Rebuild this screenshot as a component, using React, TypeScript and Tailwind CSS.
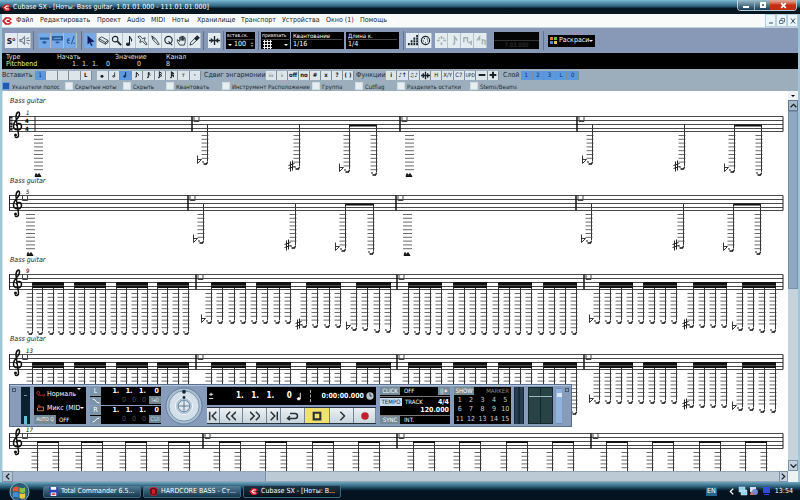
import type { ReactNode } from "react";
import clsx from "clsx";

const menu = [
  { label: "Файл", width: "w-[24px]" },
  { label: "Редактировать", width: "w-[57px]" },
  { label: "Проект", width: "w-[30px]" },
  { label: "Audio", width: "w-[24px]" },
  { label: "MIDI", width: "w-[21px]" },
  { label: "Ноты", width: "w-[25px]" },
  { label: "Хранилище", width: "w-[44px]" },
  { label: "Транспорт", width: "w-[41px]" },
  { label: "Устройства", width: "w-[44px]" },
  { label: "Окно (1)", width: "w-[34px]" },
  { label: "Помощь", width: "w-[30px]" },
];

const info = [
  { label: "Type", value: "Pitchbend", style: "w-[51px]", valueStyle: "text-[#f0efa0]" },
  { label: "Начать", value: "1.  1.  1.    0", style: "w-[58px]", valueStyle: "pl-[15px]" },
  { label: "Значение", value: "0", style: "w-[51px]", valueStyle: "pl-[22px]" },
  { label: "Канал", value: "8", style: "w-[40px]", valueStyle: "" },
];

const filters = [
  { label: "Указатели полос", width: "w-[63px]", checked: true },
  { label: "Скрытые ноты", width: "w-[58px]" },
  { label: "Скрыть", width: "w-[43px]" },
  { label: "Квантовать", width: "w-[56px]" },
  { label: "Инструмент Расположение", width: "w-[90px]" },
  { label: "Группа", width: "w-[43px]" },
  { label: "Cutflag", width: "w-[42px]" },
  { label: "Разделить остатки", width: "w-[73px]" },
  { label: "Stems/Beams", width: "w-[60px]" },
];

const noteLengths: [string, ReactNode][] = [
  ["1/1", <ellipse key="n" cx="6" cy="8" rx="2" ry="1.5" fill="currentColor" />],
  ["1/2", <path key="n" d="M7 2v6M7 8a1.5 1.2 0 1 1-3 0a1.5 1.2 0 1 1 3 0" />],
  ["1/4", <path key="n" d="M7 2v6a1.5 1.2 0 1 1-1-1z" fill="currentColor" />],
  ["1/8", <path key="n" d="M5 9V2l3 3v2M5 9H3.5" strokeWidth="1.5" />],
  ["1/16", <path key="n" d="M5 10V2l3 2M5 4l3 3M5 9.5H3" strokeWidth="1.5" />],
  ["1/32", <path key="n" d="M5 10V1l4 3M5 4l4 3M5 6l3 3M5 10H3" strokeWidth="1.5" />],
  ["1/64", <path key="n" d="M5 10V1l4 3-4-1 4 4-4-1 4 3M5 10H3" strokeWidth="1.5" />],
];

function Icon({ children, className = "size-[11px]" }: { children: ReactNode; className?: string }) {
  return (
    <svg viewBox="0 0 12 12" className={className} fill="none" stroke="currentColor" strokeWidth="1.2" aria-hidden="true">
      {children}
    </svg>
  );
}

function Tool({ label, active, dim, children }: { label: string; active?: boolean; dim?: boolean; children: ReactNode }) {
  return (
    <button
      aria-label={label}
      className={clsx(
        "flex h-[15px] w-[13px] items-center justify-center border-r border-[#b3bfca]",
        active ? "bg-[#76a9e8]" : "bg-[#e3ecf0]",
        dim ? "text-[#a3b0ae]" : "text-[#1d2730]"
      )}
    >
      {children}
    </button>
  );
}

function Small({ label, active, children }: { label: string; active?: boolean; children?: ReactNode }) {
  return (
    <button
      aria-label={label}
      className={clsx(
        "flex h-[9px] min-w-0 flex-1 items-center justify-center border-r border-[#7d8c99] text-[6px] leading-none",
        active ? "bg-[#5c98e0] text-[#0c2b60]" : "bg-[#dce5ea] text-[#18202a]"
      )}
    >
      {children}
    </button>
  );
}

function Caret() {
  return <span className="border-x-2 border-t-2 border-x-transparent border-t-white" />;
}

function Logo({ className }: { className: string }) {
  return (
    <svg viewBox="0 0 12 12" className={className} aria-hidden="true">
      <path d="M0 6 4 1.500h5L12 4 9 6l3 2-3 2.500H4z" fill="#d51f2b" />
      <path d="M9 4H6L4 6l2 2h3" fill="none" stroke="#fff" strokeWidth="1.6" />
    </svg>
  );
}

function TitleBar() {
  return (
    <header className="flex h-[14px] shrink-0 items-center bg-linear-to-b from-[#7dbbd6] via-[#2d617c] via-45% to-[#071722] to-60% pl-[2px] text-white">
      <Logo className="mr-[2px] size-[9px]" />
      <h1 className="text-[7px] leading-[14px]">Cubase SX - [Ноты: Bass guitar, 1.01.01.000 - 111.01.01.000]</h1>
      <div className="mr-[3px] ml-auto flex h-[11px] self-start overflow-hidden rounded-b-sm border border-t-0 border-[#b6cfdb]">
        <button aria-label="Свернуть" className="flex w-[17px] items-center justify-center border-r border-[#9ab4c2] bg-linear-to-b from-[#9dc0cf] to-[#173c52]">
          <span className="mt-[3px] h-[2px] w-[6px] bg-white" />
        </button>
        <button aria-label="Восстановить" className="flex w-[15px] items-center justify-center bg-linear-to-b from-[#9dc0cf] to-[#173c52]">
          <span className="size-[6px] border-2 border-white" />
        </button>
        <button aria-label="Закрыть" className="flex w-[26px] items-center justify-center bg-linear-to-b from-[#e0a090] from-10% to-[#c42d12] to-50%">
          <Icon className="size-[7px]"><path d="m2 2 8 8M10 2l-8 8" stroke="#fff" strokeWidth="3" /></Icon>
        </button>
      </div>
    </header>
  );
}

function MenuBar() {
  const control = "flex w-[11px] items-center justify-center border border-[#b5cfdb] bg-[#ebf5fa]";
  return (
    <nav className="flex h-[13px] shrink-0 items-center bg-[#f8fafa] text-[7px] text-[#222]">
      <Logo className="mr-[4px] size-[10px]" />
      {menu.map((item) => (
        <button key={item.label} className={clsx("text-left", item.width)}>{item.label}</button>
      ))}
      <div className="ml-auto flex h-full text-[#365266]">
        <button aria-label="Свернуть окно нот" className={control}><Icon className="size-[6px]"><path d="M2 10h8" strokeWidth="2" /></Icon></button>
        <button aria-label="Восстановить окно нот" className={control}><Icon className="size-[6px]"><path d="M1 5h7v6H1zM4 4V1h7v7H9" strokeWidth="1.5" /></Icon></button>
        <button aria-label="Закрыть окно нот" className={control}><Icon className="size-[6px]"><path d="m2 1 8 10M10 1 2 11" strokeWidth="2" /></Icon></button>
      </div>
    </nav>
  );
}

function Divider() {
  return <span className="mx-[2px] h-[19px] w-px bg-[#5f7391]" />;
}

function Field({ id, label, value }: { id: string; label: string; value: string }) {
  return (
    <div className="relative mr-[2px] flex h-[17px] w-[53px] flex-col bg-black px-[2px] text-white">
      <label htmlFor={id} className="border-b border-[#444] text-[6px] leading-[7px]">{label}</label>
      <select id={id} className="w-full appearance-none bg-black text-[7px] leading-[9px]">
        <option>{value}</option>
      </select>
      <span className="pointer-events-none absolute right-[3px] bottom-[3px]"><Caret /></span>
    </div>
  );
}

function ToolBar() {
  return (
    <div className="flex h-[26px] shrink-0 items-center border-t border-[#c6d3df] bg-[#8799b6] pl-[3px]">
      <div className="flex">
        <Tool label="Solo"><span className="text-[10px] leading-none font-bold">s<sup className="text-[5px]">o</sup></span></Tool>
        <Tool label="Звук"><Icon><path d="M1 5h2l3-3v8L3 7H1zM8 4l3-1M8 6h4M8 8l3 2" stroke="#758390" /></Icon></Tool>
      </div>
      <Divider />
      <div className="flex pr-[2px] pl-[2px]">
        <Tool label="Строка инструментов" active><Icon><path d="M1 4h10M4 8h4" strokeWidth="2.5" stroke="#285e9a" /></Icon></Tool>
        <Tool label="Строка фильтров" active><Icon><path d="M1 2h10v3H1zM4 8h4" strokeWidth="2" stroke="#285e9a" /></Icon></Tool>
        <Tool label="Информация" active><Icon><path d="M5 4a2 2 0 1 0 0 5M5 6H2M10 1 7 10M9 9h2" stroke="#285e9a" /></Icon></Tool>
      </div>
      <Divider />
      <div className="flex">
        <Tool label="Указатель" active><Icon><path d="m3 1 7 6-4 1 2 3-1 1-2-4-2 2z" fill="#0c1b55" stroke="#0c1b55" strokeWidth=".4" /></Icon></Tool>
        <Tool label="Ластик"><Icon><path d="m1 4 3-2 7 4v2L8 10 1 6zM1 4l7 4 3-2M8 8v2" strokeWidth=".9" /></Icon></Tool>
        <Tool label="Лупа"><Icon><circle cx="4.5" cy="4.5" r="3" /><path d="m7 7 4 4" strokeWidth="2" /></Icon></Tool>
        <Tool label="Нота"><Icon><path d="M6 10V1c0 3 4 3 2 6" /><ellipse cx="4.5" cy="10" rx="1.8" ry="1.3" fill="currentColor" /></Icon></Tool>
        <Tool label="Клей"><Icon><path d="m1 2 2-1 3 3 3-1-1 3 3 4-1 1-4-4-3 1 1-3z" strokeWidth=".9" /></Icon></Tool>
        <Tool label="Карандаш"><Icon><path d="m2 1 1 4 6 6 1-1-4-6zM2 1l3 4" strokeWidth=".9" /></Icon></Tool>
        <Tool label="Квантизация"><Icon><circle cx="6" cy="5.5" r="4" /><path d="m6 7 4 4" /></Icon></Tool>
        <Tool label="Рука"><Icon><path d="M4 11 1.500 7V5L4 7V2.500h1.500V6 1.500H7V6 1.500h1.500V6 3H10v5l-1 3z" strokeWidth=".9" /></Icon></Tool>
        <Tool label="Пипетка"><Icon><path d="m1 11 1-3 4-4 2 2-4 4z" strokeWidth=".9" /><path d="m6 4 3-3 2 2-3 3" fill="currentColor" /></Icon></Tool>
      </div>
      <Divider />
      <div className="flex pl-[2px]">
        <Tool label="Автопрокрутка"><Icon><path d="M6 1v10M0 6h12" strokeWidth="1.5" /><path d="m2 3 3 3-3 3zM10 3 7 6l3 3z" fill="currentColor" stroke="none" /></Icon></Tool>
      </div>
      <Divider />
      <div className="mr-px flex h-[17px] w-[29px] flex-col bg-black px-px text-white">
        <label htmlFor="velocity" className="border-b border-[#444] text-[5px] leading-[7px] whitespace-nowrap">встав.ск.</label>
        <div className="flex items-center pl-px">
          <Caret />
          <input id="velocity" defaultValue="100" className="ml-[2px] w-[16px] bg-black text-[7px] leading-[9px]" />
          <Icon className="h-[7px] w-[4px]"><path d="m1 3 5-3 5 3zM1 9l5 3 5-3z" fill="#fff" stroke="none" /></Icon>
        </div>
      </div>
      <Divider />
      <button aria-label="Привязка" className="mr-px flex h-[17px] w-[29px] flex-col bg-black px-px text-left text-white">
        <span className="w-full border-b border-[#444] text-[5px] leading-[7px]">привязать</span>
        <span className="flex w-full items-center justify-between px-px"><Icon className="size-[9px]"><path d="M0 2h12M0 6h12M0 10h12M2 0v12M6 0v12M10 0v12" /></Icon><Caret /></span>
      </button>
      <Field id="quantize" label="Квантование" value="1/16" />
      <Field id="length" label="Длина к." value="1/4" />
      <Divider />
      <div className="mr-[3px] flex">
        <Tool label="Пошаговый ввод"><Icon><path d="M1 10h2M4 10h2M7 10h2M10 10h2M4 7h2M7 7h2M10 7h2M7 4h2M10 4h2M10 1h2" strokeWidth="2.3" /></Icon></Tool>
        <Tool label="MIDI вход"><Icon><circle cx="6" cy="6" r="4.500" /><circle cx="6" cy="6" r="2.500" strokeDasharray="1 2" /></Icon></Tool>
      </div>
      <div className="flex">
        <Tool label="MIDI ввод" dim><Icon><path d="M6 1v3M6 8v3M1 6h3M8 6h3M3 3l1 1M9 3 8 4" strokeWidth="1.8" /></Icon></Tool>
        <Tool label="Ввод ноты" dim><Icon><path d="M6 10V2l3 4M6 10H4" strokeWidth="1.5" /></Icon></Tool>
        <Tool label="Ввод высоты" dim><Icon><path d="M2 8V3h4v5M7 9l3-2v4" strokeWidth="1.5" /></Icon></Tool>
        <Tool label="Ввод скорости" dim><Icon><path d="M2 6 5 2v4M8 10V5l3 1v5" strokeWidth="1.5" /></Icon></Tool>
      </div>
      <div className="mr-[2px] ml-[7px] flex h-[17px] w-[45px] items-end justify-center bg-[#050505] text-[6px] leading-[8px] text-[#3c3c3c]">
        <span className="w-full border-t border-[#333] text-center">7.03.000</span>
      </div>
      <Divider />
      <button className="ml-[2px] flex h-[12px] w-[47px] items-center bg-black pl-[2px] text-[7px] text-white">
        <span className="mr-[2px] grid grid-cols-2 gap-px">
          <i className="size-[3px] bg-[#e07a32]" /><i className="size-[3px] bg-[#6ebf4b]" />
          <i className="size-[3px] bg-[#4f87d8]" /><i className="size-[3px] bg-[#e5c54b]" />
        </span>
        Раскраси
        <Caret />
      </button>
    </div>
  );
}

function InfoLine() {
  return (
    <dl className="flex h-[16px] shrink-0 bg-black pt-px pl-[4px] text-[7px] leading-[7px] text-[#dfe3e6]">
      {info.map((item) => (
        <div key={item.label} className={item.style}>
          <dt>{item.label}</dt>
          <dd className={clsx("whitespace-pre", item.valueStyle)}>{item.value}</dd>
        </div>
      ))}
    </dl>
  );
}

function SymbolBar() {
  return (
    <div className="flex h-[12px] shrink-0 items-center bg-[#9caebb] text-[7px] text-[#1c2731]">
      <span className="w-[33px] shrink-0">Вставить</span>
      <div className="mr-[5px] flex w-[57px]">
        <Small label="Голос 1" active>1</Small>
        <Small label="Голос 2" />
        <Small label="Голос 3" />
        <Small label="Голос 4" />
        <Small label="L"><b>L</b></Small>
      </div>
      <div className="mr-[3px] flex w-[104px]">
        {noteLengths.map(([label, icon]) => (
          <Small key={label} label={label} active={label === "1/4"}><Icon className="size-[8px]">{icon}</Icon></Small>
        ))}
        <Small label="Триоль">т</Small>
        <Small label="С точкой"><b>·</b></Small>
      </div>
      <span className="w-[62px] whitespace-nowrap">Сдвиг энгармонии</span>
      <div className="mr-[2px] flex w-[88px]">
        {["♭♭", "♭", "off", "no", "#", "x", "?", "( )"].map((s) => <Small key={s} label={s}><b>{s}</b></Small>)}
      </div>
      <span className="w-[30px]">Функции</span>
      <div className="mr-[4px] flex w-[113px]">
        <Small label="Сведения"><b>i</b></Small>
        <Small label="Перевернуть"><b>♪↑</b></Small>
        <Small label="Группировать"><b>♫♪</b></Small>
        <Small label="Автолейаут"><Icon className="size-[9px]"><path d="M6 1v10M0 6h12M3 3v6M9 3v6" strokeWidth="1.8" /></Icon></Small>
        <Small label="Скрыть ноты">H</Small>
        <Small label="Позиция">X/Y</Small>
        <Small label="Аккорд">C7</Small>
        <Small label="Обновить"><span className="text-[5px]">UPD</span></Small>
        <Small label="Меньше"><Icon className="size-[8px]"><path d="M1 6h10" strokeWidth="3" /></Icon></Small>
        <Small label="Больше"><Icon className="size-[8px]"><path d="M1 6h10M6 1v10" strokeWidth="3" /></Icon></Small>
      </div>
      <span className="w-[18px]">Слой</span>
      <div className="flex w-[58px]">
        {["1", "2", "3", "L", "0"].map((s) => <Small key={s} label={`Слой ${s}`} active>{s}</Small>)}
      </div>
    </div>
  );
}

function FilterBar() {
  return (
    <div className="flex h-[10px] shrink-0 items-center bg-[#9caebb] text-[6px] text-[#1c2731]">
      {filters.map((item) => (
        <label key={item.label} className={clsx("flex items-center gap-[2px] whitespace-nowrap", item.width)}>
          <input type="checkbox" defaultChecked={item.checked} className="size-[8px] shrink-0 appearance-none border border-[#d0dbe2] bg-[#e6eef2] checked:border-[#6c9be0] checked:bg-[#2358ab]" />
          {item.label}
        </label>
      ))}
    </div>
  );
}

/* ---- score ---- */

type Mark = "flat" | "sharp";

const LINES = [0, 4, 8, 12, 15];

function Accidental({ type, x, y }: { type: Mark; x: number; y: number }) {
  if (type === "flat") return <path d={`M${x} ${y - 6}v8l4-4h-4`} fill="none" stroke="#222" strokeWidth=".9" />;
  return <path d={`M${x + 1} ${y - 5}v10M${x + 3} ${y - 6}v10M${x - 1} ${y - 1}l6-2M${x - 1} ${y + 2}l6-2`} fill="none" stroke="#222" />;
}

function Column({ x, top, end, mark, head = true }: { x: number; top: number; end: number; mark?: Mark; head?: boolean }) {
  const count = Math.floor((end - 21) / 3.8) + 1;
  return (
    <g>
      <path d={`M${x} ${top + 8}V${top + end}`} stroke="#333" />
      {Array.from({ length: count }, (_, i) => (
        <path key={i} d={`M${x - 6} ${top + 19 + i * 3.8}h7`} stroke="#444" strokeWidth=".8" />
      ))}
      {head && <path d={`M${x - 5} ${top + end}l1 1M${x - 4} ${top + end + 2.5}h3l1-2`} fill="none" stroke="#111" strokeWidth="1.3" />}
      {mark && <Accidental type={mark} x={x - 10} y={top + end} />}
    </g>
  );
}

function Whole({ x, top }: { x: number; top: number }) {
  return (
    <g>
      {Array.from({ length: 10 }, (_, i) => (
        <path key={i} d={`M${x - 4} ${top + 19 + i * 3.8}h9`} stroke="#444" strokeWidth=".8" />
      ))}
      <path d={`M${x - 3} ${top + 60}l1-3 2 2 1-2 2 3z`} fill="#222" stroke="#111" />
    </g>
  );
}

function Staff({ top, bars, number, first }: { top: number; bars: number[]; number: string; first?: boolean }) {
  return (
    <g>
      {LINES.map((y) => <path key={y} d={`M9 ${top + y}H783`} stroke="#4a4a4a" />)}
      <path d={`M9.500 ${top}v15M783 ${top}v15`} stroke="#222" />
      {bars.map((x) => (
        <g key={x}>
          <path d={`M${x} ${top}v15`} stroke="#111" strokeWidth="1.5" />
          <path d={`M${x + 2} ${top}v5h5v-5`} fill="none" stroke="#444" />
        </g>
      ))}
      <path
        d={`M15 ${top + 20}c1 2 4 1 3.500-2l-2.500-17c0-6 4-7 3.500-3 0 4-6 6-6 11.500 0 5 8 5 8 .5 0-4-5-4-5-.5`}
        fill="none"
        stroke="#111"
        strokeWidth="1.5"
      />
      <circle cx="15.500" cy={top + 18.5} r="1.500" fill="#111" />
      {first ? (
        <>
          <path d={`M11 ${top}v15`} stroke="#222" strokeWidth="3" strokeDasharray="2 1" />
          <text x="25" y={top + 6} fontSize="6" fontWeight="700">4</text>
          <text x="25" y={top + 14} fontSize="6" fontWeight="700">4</text>
          <path d={`M35 ${top}v15`} stroke="#222" />
        </>
      ) : (
        <path d={`M22.500 ${top}v5h5v-5`} fill="none" stroke="#444" />
      )}
      <text x="26" y={top - 2} fontSize="6" fontStyle="italic">{number}</text>
    </g>
  );
}

function Phrase({ top, stems }: { top: number; stems: number[] }) {
  const [a, b, c, d] = stems;
  return (
    <g>
      <Column x={a} top={top} end={45} mark="flat" />
      <Column x={b} top={top} end={50} mark="sharp" />
      <Column x={c} top={top} end={53} mark="flat" />
      <Column x={d} top={top} end={56} />
      <path d={`M${c} ${top + 9}H${d}`} stroke="#111" strokeWidth="2" />
    </g>
  );
}

// sixteenths: four groups of four under a double beam
function Sixteenths({ top, starts, width, falling }: { top: number; starts: number[]; width: number; falling?: boolean }) {
  return (
    <g>
      {starts.map((start, g) => (
        <g key={start}>
          {[0, 1, 2, 3].map((i) => {
            const end = !falling ? 57 : g < 2 ? 46 : g === 2 ? 50 : i < 2 ? 53 : 55;
            const mark = falling && i === 0 && g !== 1 ? (g === 2 ? "sharp" : "flat") : undefined;
            return <Column key={i} x={start + Math.round((i * width) / 3)} top={top} end={end} mark={mark} />;
          })}
          <path d={`M${start} ${top + 10.5}h${width + 0.5}`} stroke="#111" strokeWidth="6" />
          <path d={`M${start} ${top + 11}h${width}`} stroke="#777" strokeWidth=".6" />
        </g>
      ))}
    </g>
  );
}

function Score() {
  const pairs = [37, 81, 125, 168, 219, 265, 312, 358, 413, 459, 506, 552, 606, 652, 699, 745];
  return (
    <svg viewBox="3 91 785 380" preserveAspectRatio="xMinYMin slice" className="size-full" role="img" aria-label="Bass guitar">
      {[103, 183, 262, 341].map((y) => (
        <text key={y} x="10" y={y} fontSize="7" fontStyle="italic" fill="#222">Bass guitar</text>
      ))}

      <Staff top={116.5} bars={[192, 400, 577]} number="1" first />
      <Whole x={38} top={116.5} />
      <Phrase top={116.5} stems={[207.5, 299.5, 349.5, 376.5]} />
      <Whole x={409} top={116.5} />
      <Phrase top={116.5} stems={[592.5, 684.5, 734.5, 761.5]} />

      <Staff top={195.5} bars={[188, 396, 576]} number="5" />
      <Whole x={30} top={195.5} />
      <Phrase top={195.5} stems={[203.5, 295.5, 345.5, 373.5]} />
      <Whole x={407} top={195.5} />
      <Phrase top={195.5} stems={[591.5, 683.5, 733.5, 760.5]} />

      {[274.5, 354.5].map((top) => (
        <g key={top}>
          <Staff top={top} bars={[196, 397, 584]} number={top < 300 ? "9" : "13"} />
          <Sixteenths top={top} starts={[32.5, 74.5, 116.5, 157.5]} width={31} />
          <Sixteenths top={top} starts={[211.5, 256.5, 306.5, 356.5]} width={34} falling />
          <Sixteenths top={top} starts={[408.5, 453.5, 498.5, 543.5]} width={33} />
          <Sixteenths top={top} starts={[599.5, 643.5, 693.5, 742.5]} width={33} falling />
        </g>
      ))}

      <Staff top={433.5} bars={[203, 397, 591]} number="17" />
      {pairs.map((x) => (
        <g key={x}>
          <Column x={x + 0.5} top={433.5} end={40} head={false} />
          <Column x={x + 21.5} top={433.5} end={40} head={false} />
          <path d={`M${x} ${442}h22`} stroke="#111" strokeWidth="2" />
        </g>
      ))}
    </svg>
  );
}

/* ---- transport ---- */

const transport: { label: string; width: string; icon: ReactNode; active?: boolean }[] = [
  { label: "В начало", width: "w-[13px]", icon: <path d="M2 1v10M10 1 5 6l5 5" /> },
  { label: "Назад", width: "w-[23px]", icon: <path d="M5 1 0 6l5 5M12 1 7 6l5 5" /> },
  { label: "Вперёд", width: "w-[24px]", icon: <path d="m0 1 5 5-5 5M7 1l5 5-5 5" /> },
  { label: "В конец", width: "w-[14px]", icon: <path d="m2 1 5 5-5 5M10 1v10" /> },
  { label: "Цикл", width: "w-[24px]", icon: <path d="M3 3h6a3 3 0 0 1 0 6H0M3 6 0 9l3 2" /> },
  { label: "Стоп", width: "w-[25px]", icon: <path d="M2 2h8v8H2z" strokeWidth="2.5" />, active: true },
  { label: "Играть", width: "w-[24px]", icon: <path d="m4 1 5 5-5 5" /> },
  { label: "Запись", width: "w-[22px]", icon: <circle cx="6" cy="6" r="4.5" fill="#c3202d" stroke="none" /> },
];

function Locator({ side, punch }: { side: string; punch: string }) {
  return (
    <div className="flex h-[18px] w-[71px] bg-black">
      <div className="flex w-[11px] flex-col gap-px">
        <button className="h-[9px] bg-[#7b94a8] text-[7px] leading-[9px] text-white">{side}</button>
        <button aria-label={punch} className="flex h-[8px] items-center justify-center bg-[#7b94a8] text-white"><Icon className="size-[8px]"><path d={side === "L" ? "M1 3c5 0 4 6 10 6" : "M1 9c5 0 4-6 10-6"} strokeWidth="1.5" /></Icon></button>
      </div>
      <div className="flex-1 text-right">
        <div className="pr-[2px] text-[7px] leading-[9px] font-bold whitespace-pre text-white">1.   1.   1.    0</div>
        <div className="flex justify-end text-[7px] leading-[8px] whitespace-pre text-[#4b5254]"><span className="mr-[3px]">0   0   0</span><span className="w-[12px] bg-[#71858e] text-center text-[6px] text-[#c8d5da]">{punch}</span></div>
      </div>
    </div>
  );
}

function TransportPanel() {
  return (
    <section aria-label="Транспорт" className="absolute top-[293px] left-[6px] flex h-[43px] w-[563px] items-center border border-[#58708f] bg-[#879cba] shadow-[inset_0_1px_0_#b6c6da]">
      <button aria-label="Закрыть панель" className="mt-[3px] mr-[5px] ml-[2px] size-[4px] shrink-0 self-start border border-[#445874]" />
      <div className="mr-[4px] flex h-[37px] w-[9px] shrink-0 flex-col justify-end bg-[#0b202e] px-[3px]"><span className="mt-[8px] mb-auto h-px bg-[#6f95a5]" /><span className="h-[8px] bg-[#66bfd8]" /></div>
      <div className="mr-[4px] flex h-[37px] w-[52px] shrink-0 flex-col bg-black text-[7px] text-white">
        <button className="flex h-[14px] items-center"><Icon className="mx-[2px] size-[9px] text-[#b82b2b]"><circle cx="3" cy="4" r="2" /><path d="M3 7h9l-2-2M12 7l-2 2" /></Icon>Нормаль<span className="ml-px"><Caret /></span></button>
        <button className="flex h-[14px] items-center whitespace-nowrap"><Icon className="mx-[2px] size-[9px] text-[#d5804c]"><path d="M3 4h7v5H2V5M1 7l2-2" /><circle cx="4" cy="3" r="1.5" stroke="#b82b2b" /></Icon>Микс (MID<Caret /></button>
        <button className="flex h-[9px] items-center text-[6px]"><span className="mr-[3px] w-[22px] bg-[#738a97] text-center text-[5px] leading-[9px] whitespace-nowrap">AUTO Q</span>OFF</button>
      </div>
      <div className="mr-[4px] flex shrink-0 flex-col gap-px">
        <Locator side="L" punch="I◂0" />
        <Locator side="R" punch="CUI" />
      </div>
      <svg viewBox="0 0 40 40" className="mr-[4px] size-[38px] shrink-0" aria-hidden="true">
        <circle cx="20" cy="20" r="19" fill="#a9bed0" stroke="#5f7996" />
        <circle cx="20" cy="20" r="16" fill="#d3e0ea" stroke="#758da6" />
        <circle cx="20" cy="20" r="9" fill="#b0c3d3" stroke="#f1f7fb" />
        <circle cx="20" cy="20" r="6" fill="#dce7f0" stroke="#6e869e" />
        <path d="M20 15v10M15 20h10" stroke="#5a7088" />
        <circle cx="20" cy="5" r="2" fill="#162837" />
        <circle cx="20" cy="11" r="1.5" fill="#162837" />
      </svg>
      <div className="mr-[4px] flex w-[169px] shrink-0 flex-col gap-[2px]">
        <div className="flex h-[18px] items-center bg-black text-white">
          <Icon className="ml-[2px] h-[12px] w-[5px]"><path d="M0 2h10M5-2v8M0 12h10" strokeWidth="2" /></Icon>
          <output className="ml-[22px] text-[8px] font-bold whitespace-pre">1.   1.   1.     0</output>
          <Icon className="ml-[3px] size-[9px]"><path d="M7 1v8" /><ellipse cx="5" cy="9" rx="2" ry="1.5" fill="currentColor" /></Icon>
          <span className="ml-[6px] h-[12px] border-l border-dashed border-[#aaa]" />
          <output className="ml-auto text-[7px] font-bold">0:00:00.000</output>
          <Icon className="mx-[2px] size-[8px]"><circle cx="6" cy="6" r="5.5" fill="#b6c5ca" stroke="none" /><path d="M6 2v4h3" stroke="#142028" /></Icon>
        </div>
        <div className="flex h-[17px] bg-[#26323e] py-px">
          {transport.map((b) => (
            <button key={b.label} aria-label={b.label} className={clsx("flex items-center justify-center border-r border-[#748695] text-[#2a3138]", b.width, b.active ? "bg-[#efe26e]" : "bg-linear-to-b from-[#edf2f4] to-[#c7d4dc]")}>
              <svg viewBox="0 0 12 12" className={clsx("h-[10px]", b.label === "Цикл" ? "w-[13px]" : "w-[10px]")} fill="none" stroke="currentColor" strokeWidth="1.8" aria-hidden="true">{b.icon}</svg>
            </button>
          ))}
        </div>
      </div>
      <div className="mr-[4px] flex h-[37px] w-[70px] shrink-0 flex-col justify-between bg-black text-[7px] leading-[8px] text-white">
        <div className="flex h-[8px] text-[6px]"><button className="mr-[4px] w-[20px] bg-[#748a96]">CLICK</button>OFF<span className="ml-auto w-[12px] bg-[#748a96] text-center">||✶</span></div>
        <div className="flex border-t border-[#777] pt-px"><button className="mr-[3px] h-[8px] w-[22px] bg-[#c5dcf0] text-[6px] text-[#14263c]">TEMPO</button><span className="text-[6px]">TRACK</span><b className="ml-auto pr-px">4/4</b></div>
        <output className="pr-px text-right font-bold">120.000</output>
        <div className="flex h-[9px] border-t border-[#777] text-[6px]"><button className="mr-[4px] w-[20px] bg-[#748a96]">SYNC</button>INT.</div>
      </div>
      <div className="mr-[3px] flex h-[37px] w-[57px] shrink-0 flex-col bg-black text-[7px] text-[#cbd1d4]">
        <div className="flex h-[8px] justify-between text-[6px] leading-[8px]"><button className="w-[20px] bg-[#748a96] text-white">SHOW</button><span className="pr-[2px] text-[#858c90]">MARKER</span></div>
        <div className="grid flex-1 grid-cols-5 items-center">
          {Array.from({ length: 15 }, (_, i) => <button key={i} aria-label={`Маркер ${i + 1}`} className="leading-[8px]">{i + 1}</button>)}
        </div>
      </div>
      <div className="mr-[4px] flex h-[37px] w-[10px] shrink-0 justify-evenly bg-[#1a2934]"><span className="w-[3px] bg-[#263d52]" /><span className="w-[3px] bg-[#263d52]" /></div>
      <div className="mr-[3px] flex h-[37px] w-[25px] shrink-0 flex-col border border-[#142630] bg-[#274346]">
        <div className="flex h-[9px] border-b border-[#a0b9b8]"><span className="flex-1 border-r border-[#10252a]" /><span className="flex-1" /></div>
        <div className="flex flex-1"><span className="flex-1 border-r border-[#10252a]" /><span className="flex-1" /></div>
      </div>
      <input
        type="range"
        aria-label="Громкость"
        defaultValue="85"
        className="h-[36px] w-[6px] shrink-0 appearance-none border-x border-[#6c8fc0] bg-[#8fb2de] [direction:rtl] [writing-mode:vertical-lr] [&::-webkit-slider-thumb]:h-[4px] [&::-webkit-slider-thumb]:w-[5px] [&::-webkit-slider-thumb]:appearance-none [&::-webkit-slider-thumb]:bg-[#d8e9f5]"
      />
      <span className="mt-[3px] ml-[3px] size-[4px] shrink-0 self-start border border-[#445874]" />
    </section>
  );
}

function Arrow({ d }: { d: string }) {
  return <Icon className="size-[7px]"><path d={d} strokeWidth="2.2" /></Icon>;
}

function TaskBar() {
  const task = "flex h-[13px] w-[98px] items-center gap-[3px] rounded-xs border border-[#3b6884] bg-linear-to-b pl-[5px] text-left text-[7px] whitespace-nowrap";
  const idle = "from-[#557f98] to-[#17384d]";
  return (
    <footer className="flex h-[18px] shrink-0 items-center bg-linear-to-b from-[#6ea6c0] via-[#2d627d] via-25% to-[#04131f] to-50% text-white">
      <button aria-label="Пуск" className="mr-[13px] ml-[9px] flex">
        <svg viewBox="0 0 22 18" className="h-[18px] w-[21px]" aria-hidden="true">
          <circle cx="11" cy="10" r="10" fill="#2b5c78" stroke="#8fb9c9" />
          <path d="M4 6q3-3 6-1v5q-3-2-6 0z" fill="#e45b28" />
          <path d="M11 5q3 2 6 0v5q-3 2-6 0z" fill="#8ac43f" />
          <path d="M4 11q3-2 6 0v5q-3-2-6 0z" fill="#3d91dc" />
          <path d="M11 11q3 2 6 0v5q-3 2-6 0z" fill="#f1c83c" />
        </svg>
      </button>
      <div className="flex gap-[2px]">
        <button className={clsx(task, idle)}>
          <svg viewBox="0 0 10 10" className="size-[9px]" aria-hidden="true"><path d="M0 0h10v10H0z" fill="#2745b8" /><path d="M2 0h6v3H2zM2 6h6v4H2z" fill="#fff" /><path d="M3 7h4v2H3z" fill="#d64444" /></svg>
          Total Commander 6.5...
        </button>
        <button className={clsx(task, idle)}>
          <svg viewBox="0 0 10 10" className="size-[9px]" aria-hidden="true"><circle cx="5" cy="5" r="4.500" fill="#591018" stroke="#ca2130" /><ellipse cx="5" cy="5" rx="2" ry="3" fill="#ca2130" /></svg>
          HARDCORE BASS - Ст...
        </button>
        <button className={clsx(task, "from-[#1c3444] to-[#06131c]")}>
          <Logo className="size-[9px]" />
          Cubase SX - [Ноты: B...
        </button>
      </div>
      <div className="ml-auto flex items-center pr-[7px] text-[7px]">
        <button className="mr-[11px] w-[11px] bg-[#21698b] text-center leading-[9px]">EN</button>
        <button aria-label="Показать значки" className="mr-[3px] flex"><Arrow d="M9 1 4 6l5 5" /></button>
        <svg viewBox="0 0 34 10" className="mr-[3px] h-[10px] w-[34px]" aria-hidden="true">
          <path d="M1 1h6v5H1zM3 4h6v5H3z" fill="#8fd0e6" stroke="#d8f3fa" strokeWidth=".5" />
          <path d="M12 1h6v5h-6z" fill="#d9dff1" /><circle cx="17" cy="6" r="3" fill="#7686c9" /><path d="M13 5l3 4h-4z" fill="#dc7961" />
          <path d="M25 1h7v6h-7zM26 8h5v1h-5z" fill="#3448e2" />
        </svg>
        <time>13:54</time>
      </div>
    </footer>
  );
}

export default function App() {
  return (
    <div className="flex h-screen flex-col overflow-hidden bg-[#9dc6d6] [font-family:'DejaVu_Sans_Condensed','Liberation_Sans',sans-serif]">
      <TitleBar />
      <div className="flex min-h-0 flex-1 flex-col px-[2px]">
        <MenuBar />
        <ToolBar />
        <InfoLine />
        <SymbolBar />
        <FilterBar />
        <main className="flex min-h-0 flex-1 border-l border-[#d8e6ec]">
          <div className="relative min-w-0 flex-1 overflow-hidden bg-white">
            <Score />
            <TransportPanel />
          </div>
          <div className="flex w-[10px] flex-col bg-[#c5d3dd] text-[#17212a]">
            <button aria-label="Меню" className="flex h-[9px] items-center justify-center bg-[#edf2f5]"><span className="border-x-2 border-t-2 border-x-transparent border-t-black" /></button>
            <button aria-label="Вверх" className="flex h-[11px] items-center justify-center border border-[#62788f] bg-[#a8b9cb]"><Arrow d="m1 9 5-5 5 5" /></button>
            <div className="min-h-0 flex-1"><div className="h-[51%] border border-[#7890aa] bg-[#90a7c2]" /></div>
            <button aria-label="Вниз" className="flex h-[11px] items-center justify-center border border-[#7d92a7] bg-[#c3d1dc]"><Arrow d="m1 4 5 5 5-5" /></button>
          </div>
        </main>
        <div className="flex h-[11px] shrink-0 bg-[#bccad5] text-[#17212a]">
          <button aria-label="Влево" className="flex w-[11px] items-center justify-center border border-[#7d92a7] bg-[#b4c4d5]"><Arrow d="M9 1 4 6l5 5" /></button>
          <div className="min-w-0 flex-1 border-y border-[#95a6b6]"><div className="h-full w-[33%] border-r border-[#7990a9] bg-[#a2b5cc]" /></div>
          <button aria-label="Вправо" className="flex w-[9px] items-center justify-center border border-[#7d92a7] bg-[#c3d1dc]"><Arrow d="m3 1 5 5-5 5" /></button>
          <span className="w-[10px] bg-[#edf2f5]" />
        </div>
      </div>
      <TaskBar />
    </div>
  );
}
